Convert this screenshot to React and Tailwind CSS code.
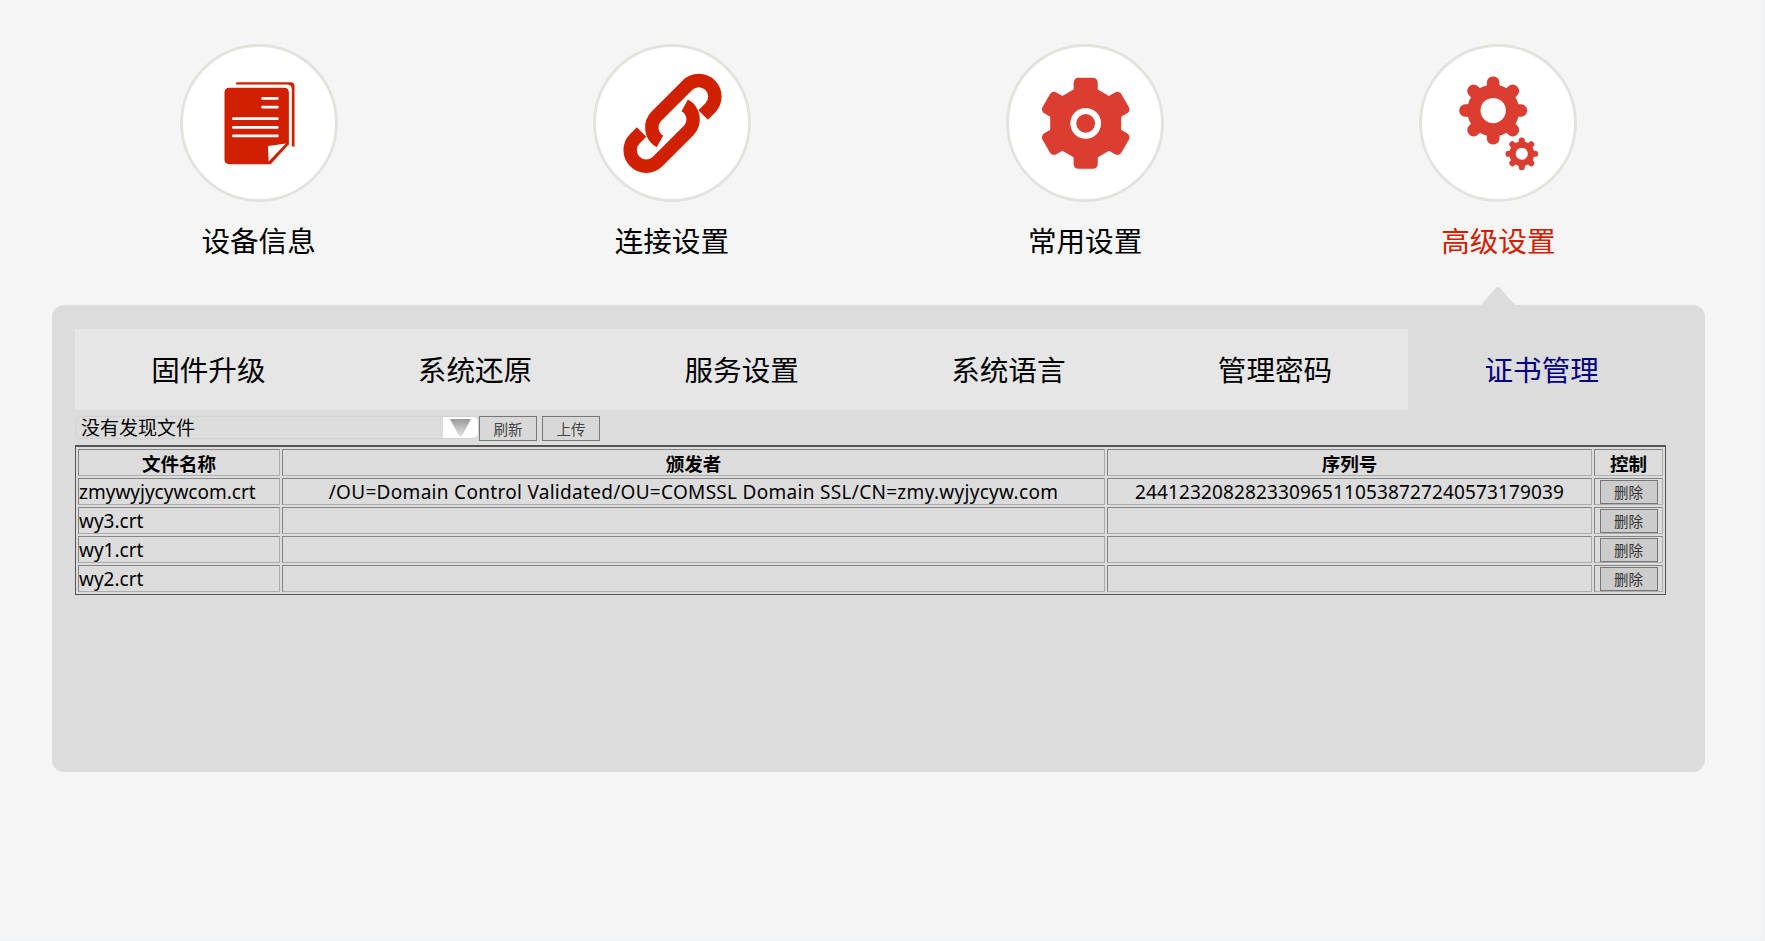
const RED = '#d02000';
const GEAR = '#db3d30';

function DocIcon() {
  return (
    <svg viewBox="96 52 458 458" className="w-full h-full">
      <path fill={RED} d="M258 158H420Q432 158 432 170V352H424V180Q424 165 408 165H258Q255 165 255 161Z" />
      <path fill={RED} d="M236 175H400Q415 175 415 190V345L360 405H236Q221 405 221 391V189Q221 175 236 175Z" />
      <path fill="#fff" d="M352 350L406 343L354 397Z" />
      <g fill="#fff">
        <rect x="332" y="203" width="52" height="8" rx="3" />
        <rect x="332" y="229" width="52" height="8" rx="3" />
        <rect x="244" y="264" width="140" height="8" rx="3" />
        <rect x="244" y="290" width="140" height="8" rx="3" />
        <rect x="244" y="316" width="140" height="8" rx="3" />
      </g>
    </svg>
  );
}

function LinkIcon() {
  return (
    <svg viewBox="78 52 454 454" className="w-full h-full">
      <g fill="none" stroke={RED} strokeWidth="40">
        <path d="M398 255L419 234A48 48 0 0 0 351 166L259 258A48 48 0 0 0 269 334" />
        <path d="M214 306L194 326A48 48 0 0 0 262 394L354 302A48 48 0 0 0 343 226" />
      </g>
    </svg>
  );
}

function CogIcon() {
  const angles = [0, 60, 120, 180, 240, 300];
  return (
    <svg viewBox="88 52 454 454" className="w-full h-full">
      <g transform="translate(317 280)" fill={GEAR}>
        <polygon points="0,-122 106,-61 106,61 0,122 -106,61 -106,-61" />
        {angles.map((a) => (
          <rect key={a} x="-36" y="-136" width="72" height="60" rx="14" transform={`rotate(${a})`} />
        ))}
        <circle r="46" fill="#fff" />
        <circle r="28" />
      </g>
    </svg>
  );
}

function Gear8({ x, y, s }) {
  const angles = [0, 45, 90, 135, 180, 225, 270, 315];
  return (
    <g transform={`translate(${x} ${y}) scale(${s})`} fill={GEAR}>
      <circle r="78" />
      {angles.map((a) => (
        <rect key={a} x="-19" y="-102" width="38" height="50" rx="18" transform={`rotate(${a})`} />
      ))}
      <circle r="38" fill="#fff" />
    </g>
  );
}

function GearsIcon() {
  return (
    <svg viewBox="97 52 457 457" className="w-full h-full">
      <Gear8 x={311} y={243} s={1} />
      <Gear8 x={397} y={373} s={0.48} />
    </svg>
  );
}

const navItems = [
  { label: '设备信息', Icon: DocIcon },
  { label: '连接设置', Icon: LinkIcon },
  { label: '常用设置', Icon: CogIcon },
  { label: '高级设置', Icon: GearsIcon, active: true },
];

const tabs = ['固件升级', '系统还原', '服务设置', '系统语言', '管理密码', '证书管理'];

const rows = [
  ['zmywyjycywcom.crt', '/OU=Domain Control Validated/OU=COMSSL Domain SSL/CN=zmy.wyjycyw.com', '244123208282330965110538727240573179039'],
  ['wy3.crt', '', ''],
  ['wy1.crt', '', ''],
  ['wy2.crt', '', ''],
];

const cellBase = 'border border-t-[#858585] border-l-[#858585] border-r-[#adadad] border-b-[#adadad] p-0 h-[27px]';
const cellBorder = `${cellBase} pt-[2px] leading-[23px]`;

export default function App() {
  return (
    <div className="h-[941px] bg-[#f0f2f6]">
      <div
        className="w-[1762px] h-[937px] bg-[#f5f5f5] text-black overflow-hidden"
        style={{ fontFamily: '"Noto Sans", "Noto Sans CJK SC", sans-serif' }}
      >
        <div className="ml-[52px] w-[1653px]">
          <div className="flex h-[305px]">
            {navItems.map(({ label, Icon, active }) => (
              <div key={label} className="relative flex-1 flex flex-col items-center pt-[44px]">
                <div className="w-[158px] h-[158px] rounded-full bg-white border-[3px] border-[#e2e2de]">
                  <Icon />
                </div>
                <div className={`mt-[19px] text-[28.6px] leading-[40px] ${active ? 'text-[#d02000]' : 'text-black'}`}>{label}</div>
                {active && (
                  <svg viewBox="0 0 34 18" className="absolute bottom-0 left-1/2 -ml-[17px] w-[34px] h-[18px]">
                    <path fill="#dcdcdc" d="M0 18L15 1Q17 -1 19 1L34 18Z" />
                  </svg>
                )}
              </div>
            ))}
          </div>
          <div className="h-[467px] bg-[#dcdcdc] rounded-[12px] pt-[24px] px-[23px]">
            <div className="flex w-[1600px] h-[81px]">
              {tabs.map((t, i) => (
                <div
                  key={t}
                  className={`flex-1 flex items-center justify-center pt-[1px] text-[28.6px] ${i === 5 ? 'text-[#000080]' : 'bg-[#e6e6e6] text-black'}`}
                >
                  {t}
                </div>
              ))}
            </div>
            <div className="flex items-start h-[35px] pt-[6px]">
              <div className="flex items-center justify-between w-[404px] h-[23px] rounded-[6px] border border-[#d2d2d2] overflow-hidden">
                <span className="pl-[5px] text-[19px] leading-[22px]">没有发现文件</span>
                <span className="flex items-center justify-center w-[35px] h-full bg-white">
                  <svg viewBox="0 0 21 19" className="w-[21px] h-[19px]">
                    <defs>
                      <linearGradient id="arrow" x1="0" y1="0" x2="0" y2="1">
                        <stop offset="0" stopColor="#999999" />
                        <stop offset="1" stopColor="#e6e6e6" />
                      </linearGradient>
                    </defs>
                    <path fill="url(#arrow)" d="M0 1H21L12 18Q10.5 19.5 9 18Z" />
                  </svg>
                </span>
              </div>
              <button className="w-[58px] h-[25px] bg-[#d8d8d8] border border-[#777] text-[14.5px] leading-[22px] text-[#444]">刷新</button>
              <button className="ml-[5px] w-[58px] h-[25px] bg-[#d8d8d8] border border-[#777] text-[14.5px] leading-[22px] text-[#444]">上传</button>
            </div>
            <table className="w-[1591px] table-fixed border-separate border-spacing-[2px] border border-t-2 border-[#555] text-[19px]">
              <colgroup>
                <col className="w-[202px]" />
                <col className="w-[823px]" />
                <col className="w-[485px]" />
                <col />
              </colgroup>
              <thead>
                <tr>
                  {['文件名称', '颁发者', '序列号', '控制'].map((h) => (
                    <th key={h} className={`${cellBorder} font-bold text-center text-[18.5px]`}>{h}</th>
                  ))}
                </tr>
              </thead>
              <tbody>
                {rows.map((r) => (
                  <tr key={r[0]}>
                    <td className={`${cellBorder} text-left`}>{r[0]}</td>
                    <td className={`${cellBorder} text-center tracking-[0.3px]`}>{r[1]}</td>
                    <td className={`${cellBorder} text-center tracking-[0.13px]`}>{r[2]}</td>
                    <td className={`${cellBase} text-center`}>
                      <button className="block mx-auto w-[58px] h-[24px] bg-[#cccccc] border border-[#777] text-[14.5px] leading-[22px] text-[#333]">删除</button>
                    </td>
                  </tr>
                ))}
              </tbody>
            </table>
          </div>
        </div>
      </div>
    </div>
  );
}
